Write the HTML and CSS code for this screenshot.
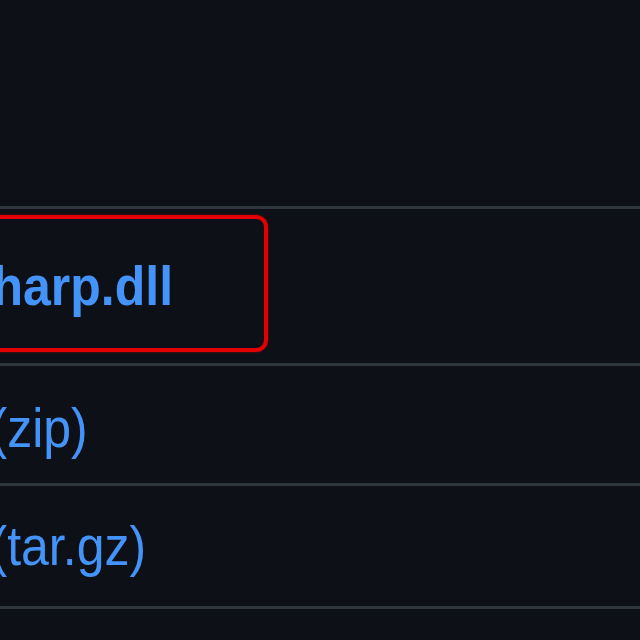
FILE: index.html
```html
<!DOCTYPE html>
<html>
<head>
<meta charset="utf-8">
<link rel="stylesheet" href="styles.css">
</head>
<body>
<div class="page">
  <div class="spacer"></div>
  <ul class="assets">
    <li class="row row-first">
      <div class="highlight">
        <a class="asset-link name-dll" href="#">harp.dll</a>
      </div>
    </li>
    <li class="row row-zip">
      <a class="asset-link name-src" href="#">(zip)</a>
    </li>
    <li class="row row-tar">
      <a class="asset-link name-src" href="#">(tar.gz)</a>
    </li>
  </ul>
</div>
</body>
</html>
```
FILE: styles.css
```css
html, body {
  margin: 0;
  padding: 0;
  background: #0d1117;
  overflow: hidden;
}
.page {
  width: 640px;
  height: 640px;
  background: #0d1117;
  font-family: "Liberation Sans", Arial, sans-serif;
}
.spacer {
  height: 206px;
}
.assets {
  list-style: none;
  margin: 0;
  padding: 0;
  border-top: 3px solid #30363d;
}
.row {
  display: flex;
  align-items: center;
  border-bottom: 3px solid #30363d;
  box-sizing: border-box;
}
.row-first {
  height: 157px;
  align-items: flex-start;
  padding-top: 6px;
}
.row-zip {
  height: 120px;
}
.row-tar {
  height: 123px;
}
.highlight {
  box-sizing: border-box;
  width: 308px;
  height: 137px;
  margin-left: -40px;
  padding-left: 28.5px;
  border: 4px solid #e30000;
  border-radius: 12px;
  display: flex;
  align-items: center;
  box-shadow: 0 0 2px rgba(230, 0, 0, 0.6);
}
.asset-link {
  display: inline-block;
  color: #4493f8;
  text-decoration: none;
  font-size: 50px;
  line-height: 56px;
  white-space: nowrap;
  transform: scaleY(1.1);
}
.name-dll {
  font-weight: 700;
  margin-top: 5px;
}
.row-zip .name-src {
  margin-top: 7px;
}
.name-src {
  margin-left: -9.5px;
}
```
